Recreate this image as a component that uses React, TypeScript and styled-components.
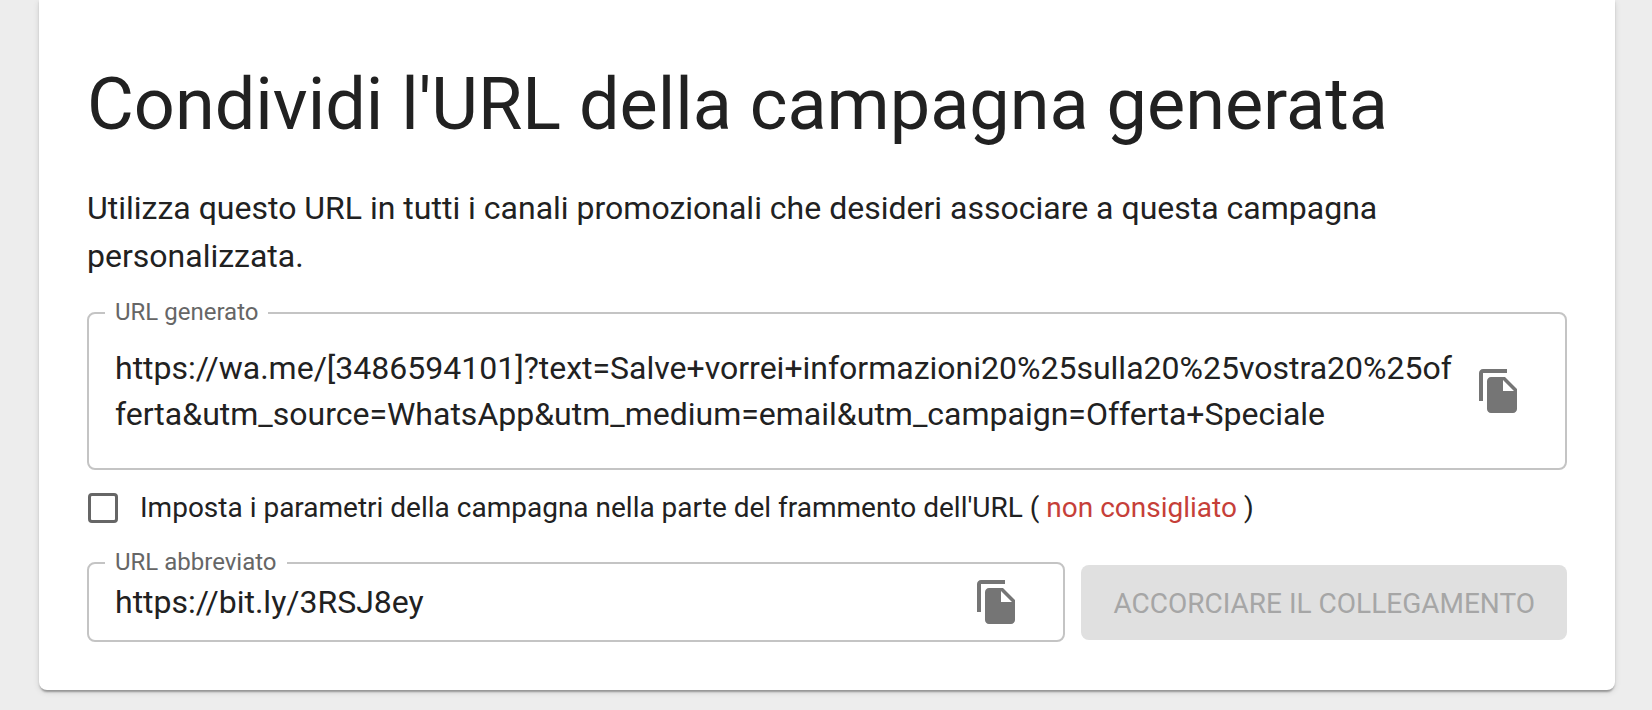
import React, { useState } from 'react';
import styled, { createGlobalStyle } from 'styled-components';

const GlobalStyle = createGlobalStyle`
  *, *::before, *::after { box-sizing: border-box; }
  body {
    margin: 0;
    background: #ededed;
    color: #212121;
    font-family: Roboto, 'Liberation Sans', sans-serif;
    font-size: 32px;
    line-height: 48px;
    -webkit-font-smoothing: antialiased;
  }
`;

const Page = styled.main`
  padding: 0 37px 20px 39px;
`;

const Card = styled.section`
  padding: 63px 48px 48px;
  background: #fff;
  border-radius: 0 0 8px 8px;
  box-shadow:
    0 4px 2px -2px rgba(0, 0, 0, 0.2),
    0 2px 2px 0 rgba(0, 0, 0, 0.14),
    0 2px 6px 0 rgba(0, 0, 0, 0.12);
`;

const Title = styled.h1`
  margin: 0 0 37px;
  font-size: 72px;
  font-weight: 400;
  line-height: 84px;
`;

const Intro = styled.p`
  margin: 0 0 32px;
`;

const Field = styled.div<{ $tall?: boolean }>`
  position: relative;
  flex: 1;
  min-width: 0;
  display: flex;
  align-items: center;
  min-height: ${({ $tall }) => ($tall ? 158 : 80)}px;
  padding: 0 18px 0 26px;
  border: 2px solid #c4c4c4;
  border-radius: 8px;
`;

const FieldLabel = styled.label`
  position: absolute;
  top: -16px;
  left: 16px;
  padding: 0 10px;
  background: #fff;
  color: #666;
  font-size: 24px;
  line-height: 28px;
`;

const TextInput = styled.input`
  flex: 1;
  min-width: 0;
  height: 46px;
  padding: 0;
  border: 0;
  outline: 0;
  background: none;
  color: inherit;
  font: inherit;
  line-height: 46px;
`;

const TextArea = styled.textarea`
  flex: 1;
  min-width: 0;
  height: 92px;
  padding: 0;
  border: 0;
  outline: 0;
  resize: none;
  overflow: hidden;
  background: none;
  color: inherit;
  font: inherit;
  line-height: 46px;
  word-break: break-all;
`;

const IconButton = styled.button`
  display: flex;
  padding: 0 24px 0 20px;
  border: 0;
  background: none;
  color: #757575;
  cursor: pointer;
`;

const OptionRow = styled.label`
  display: flex;
  align-items: center;
  gap: 22px;
  margin: 18px 0 34px;
  font-size: 28px;
  line-height: 40px;
`;

const Checkbox = styled.input`
  appearance: none;
  flex: none;
  width: 30px;
  height: 30px;
  margin: 0 0 0 1px;
  border: 3px solid #666;
  border-radius: 4px;
  &:checked { background: #666; box-shadow: inset 0 0 0 4px #fff; }
`;

const Warning = styled.span`
  color: #c63f39;
`;

const ShortenRow = styled.div`
  display: flex;
  align-items: center;
  gap: 16px;
`;

const ShortenButton = styled.button`
  padding: 15px 32px 12px;
  border: 0;
  border-radius: 8px;
  background: #e0e0e0;
  color: #a6a6a6;
  font: inherit;
  font-size: 28px;
  text-transform: uppercase;
  white-space: nowrap;
`;

function CopyIcon() {
  return (
    <svg width="48" height="48" viewBox="0 0 24 24" fill="currentColor" aria-hidden="true">
      <path d="M16 1H4c-1.1 0-2 .9-2 2v14h2V3h12V1zm-1 4l6 6v10c0 1.1-.9 2-2 2H7.99C6.89 23 6 22.1 6 21l.01-14c0-1.1.89-2 1.99-2h7zm-1 7h5.5L14 6.5V12z" />
    </svg>
  );
}

const generatedUrl =
  'https://wa.me/[3486594101]?text=Salve+vorrei+informazioni20%25sulla20%25vostra20%25offerta&utm_source=WhatsApp&utm_medium=email&utm_campaign=Offerta+Speciale';
const shortUrl = 'https://bit.ly/3RSJ8ey';

export default function App() {
  const [useFragment, setUseFragment] = useState(false);
  const copy = (text: string) => navigator.clipboard?.writeText(text);

  return (
    <>
      <GlobalStyle />
      <Page>
        <Card>
          <Title>Condividi l'URL della campagna generata</Title>
          <Intro>
            Utilizza questo URL in tutti i canali promozionali che desideri associare a questa campagna
            personalizzata.
          </Intro>
          <Field $tall>
            <FieldLabel htmlFor="generated-url">URL generato</FieldLabel>
            <TextArea id="generated-url" readOnly spellCheck={false} value={generatedUrl} />
            <IconButton type="button" aria-label="Copia URL generato" onClick={() => copy(generatedUrl)}>
              <CopyIcon />
            </IconButton>
          </Field>
          <OptionRow>
            <Checkbox
              type="checkbox"
              checked={useFragment}
              onChange={(event) => setUseFragment(event.target.checked)}
            />
            <span>
              Imposta i parametri della campagna nella parte del frammento dell'URL (&nbsp;
              <Warning>non consigliato</Warning>&nbsp;)
            </span>
          </OptionRow>
          <ShortenRow>
            <Field>
              <FieldLabel htmlFor="short-url">URL abbreviato</FieldLabel>
              <TextInput id="short-url" readOnly spellCheck={false} value={shortUrl} />
              <IconButton type="button" aria-label="Copia URL abbreviato" onClick={() => copy(shortUrl)}>
                <CopyIcon />
              </IconButton>
            </Field>
            <ShortenButton type="button" disabled>
              Accorciare il collegamento
            </ShortenButton>
          </ShortenRow>
        </Card>
      </Page>
    </>
  );
}
